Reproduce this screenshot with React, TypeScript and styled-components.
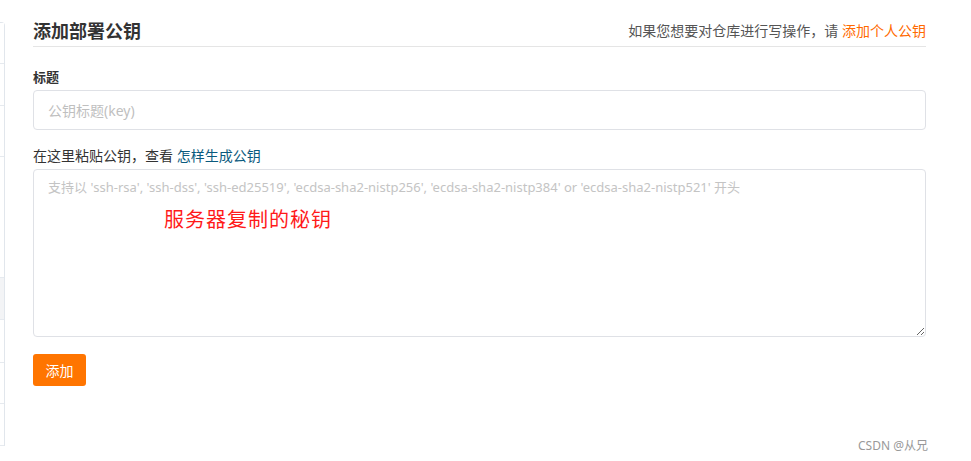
import React from 'react'
import styled, { createGlobalStyle } from 'styled-components'

const GlobalStyle = createGlobalStyle`
  body {
    margin: 0;
    background: #fff;
    font-family: "Noto Sans", "Noto Sans CJK SC", sans-serif;
    color: #333;
  }
`;

const Page = styled.div`
  position: relative;
  display: flex;
  flex-direction: row;
  align-items: flex-start;
  min-height: 461px;
  overflow: hidden;
`;

const Sidebar = styled.div`
  width: 4px;
  margin-top: 22px;
  border: 1px solid #e1e6ec;
  border-left: none;
  border-bottom: none;
  border-radius: 0 4px 0 0;
  display: flex;
  flex-direction: column;
  flex-shrink: 0;
`;

const SideItem = styled.div<{
  h: number,
  active?: boolean,
}>`
  height: ${props => props.h}px;
  border-bottom: 1px solid #e6eaef;
  background: ${props => props.active ? '#f3f4f6' : '#fff'};
`;

const Main = styled.div`
  flex: 1;
  padding: 18px 45px 0 28px;
  display: flex;
  flex-direction: column;
`;

const Header = styled.div`
  display: flex;
  flex-direction: row;
  justify-content: space-between;
  align-items: flex-end;
  border-bottom: 1px solid #e5e5e5;
  padding-bottom: 2px;
`;

const Title = styled.h3`
  margin: 0;
  font-size: 18px;
  font-weight: 700;
  line-height: 26px;
  color: #333;
`;

const Hint = styled.div`
  font-size: 14px;
  color: #555;
  line-height: 22px;
  padding-bottom: 2px;
`;

const Link = styled.a<{
  color: string,
}>`
  color: ${props => props.color};
  text-decoration: none;
  cursor: pointer;
`;

const Label = styled.div<{
  bold?: boolean,
}>`
  font-size: ${props => props.bold ? '13px' : '14px'};
  line-height: 20px;
  font-weight: ${props => props.bold ? 700 : 400};
  color: #333;
  margin-top: ${props => props.bold ? '20px' : '16px'};
  margin-bottom: 3px;
`;

const Input = styled.input`
  box-sizing: border-box;
  width: 100%;
  height: 40px;
  border: 1px solid #dfe1e6;
  border-radius: 4px;
  padding: 0 14px;
  font-size: 14px;
  font-family: inherit;
  color: #333;
  outline: none;
  &::placeholder {
    color: #bfbfbf;
  }
`;

const AreaWrap = styled.div`
  position: relative;
  display: flex;
`;

const TextArea = styled.textarea`
  box-sizing: border-box;
  width: 100%;
  height: 168px;
  border: 1px solid #dfe1e6;
  border-radius: 4px;
  padding: 7px 14px;
  font-size: 13px;
  line-height: 20px;
  font-family: inherit;
  color: #333;
  outline: none;
  resize: vertical;
  &::placeholder {
    color: #c4c4c4;
  }
`;

const Note = styled.span`
  position: absolute;
  left: 131px;
  top: 35px;
  font-size: 20px;
  letter-spacing: 1px;
  color: #ff1a1a;
  pointer-events: none;
`;

const Button = styled.button`
  margin-top: 17px;
  align-self: flex-start;
  width: 53px;
  height: 32px;
  border: none;
  border-radius: 3px;
  background: #ff7500;
  color: #fff;
  font-size: 14px;
  font-family: inherit;
  cursor: pointer;
`;

const Watermark = styled.div`
  position: absolute;
  right: 43px;
  bottom: 7px;
  font-size: 12px;
  color: #999;
`;

export default function App() {
  return (
    <Page>
      <GlobalStyle />
      <Sidebar>
        <SideItem h={40} />
        <SideItem h={41} />
        <SideItem h={50} />
        <SideItem h={120} />
        <SideItem h={41} active />
        <SideItem h={42} />
        <SideItem h={40} />
        <SideItem h={41} />
      </Sidebar>

      <Main>
        <Header>
          <Title>添加部署公钥</Title>
          <Hint>
            如果您想要对仓库进行写操作，请 <Link color="#ff6a00">添加个人公钥</Link>
          </Hint>
        </Header>

        <Label bold>标题</Label>
        <Input placeholder="公钥标题(key)" />

        <Label>
          在这里粘贴公钥，查看 <Link color="#0b5a7e">怎样生成公钥</Link>
        </Label>
        <AreaWrap>
          <TextArea placeholder="支持以 'ssh-rsa', 'ssh-dss', 'ssh-ed25519', 'ecdsa-sha2-nistp256', 'ecdsa-sha2-nistp384' or 'ecdsa-sha2-nistp521' 开头" />
          <Note>服务器复制的秘钥</Note>
        </AreaWrap>

        <Button>添加</Button>
      </Main>

      <Watermark>CSDN @从兄</Watermark>
    </Page>
  )
}
